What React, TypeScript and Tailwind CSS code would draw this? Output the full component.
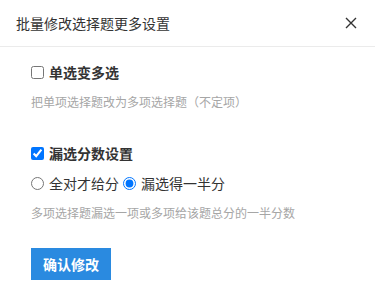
import { useState } from "react";

export default function App() {
  const [multi, setMulti] = useState(false);
  const [partial, setPartial] = useState(true);
  const [mode, setMode] = useState("half");

  return (
    <div
      className="w-[375px] h-[300px] bg-white text-[#333] overflow-hidden"
      style={{ fontFamily: '"Noto Sans CJK SC", "Noto Sans", sans-serif' }}
    >
      <div className="h-[47px] flex items-center justify-between pl-4 pr-[16px] border-b border-[#ebebeb]">
        <span className="text-[14px] leading-none text-[#333]">批量修改选择题更多设置</span>
        <button className="w-4 h-4 flex items-center justify-center text-[#333]">
          <svg width="12" height="12" viewBox="0 0 12 12">
            <path d="M1 1L11 11M11 1L1 11" stroke="currentColor" strokeWidth="1.4" />
          </svg>
        </button>
      </div>

      <div className="pl-[31px] pt-[15px]">
        <label className="h-5 flex items-center gap-[5px]">
          <input
            type="checkbox"
            checked={multi}
            onChange={() => setMulti(!multi)}
            className="w-[13px] h-[13px] m-0"
          />
          <span className="text-[14px] font-bold">单选变多选</span>
        </label>
        <p className="mt-[10px] h-5 leading-5 text-[12px] text-[#a6a6a6]">
          把单项选择题改为多项选择题（不定项）
        </p>

        <label className="mt-[31px] h-5 flex items-center gap-[5px]">
          <input
            type="checkbox"
            checked={partial}
            onChange={() => setPartial(!partial)}
            className="w-[13px] h-[13px] m-0"
          />
          <span className="text-[14px] font-bold">漏选分数设置</span>
        </label>
        <div className="mt-[10px] h-5 flex items-center text-[14px]">
          <label className="flex items-center gap-[5px]">
            <input
              type="radio"
              name="mode"
              checked={mode === "all"}
              onChange={() => setMode("all")}
              className="w-[13px] h-[13px] m-0"
            />
            <span>全对才给分</span>
          </label>
          <label className="flex items-center gap-[5px] ml-[4px]">
            <input
              type="radio"
              name="mode"
              checked={mode === "half"}
              onChange={() => setMode("half")}
              className="w-[13px] h-[13px] m-0"
            />
            <span>漏选得一半分</span>
          </label>
        </div>
        <p className="mt-[10px] h-5 leading-5 text-[12px] text-[#a6a6a6]">
          多项选择题漏选一项或多项给该题总分的一半分数
        </p>

        <button className="mt-[25px] w-[80px] h-[32px] bg-[#2a8ae0] text-white text-[14px] font-bold">
          确认修改
        </button>
      </div>
    </div>
  );
}
